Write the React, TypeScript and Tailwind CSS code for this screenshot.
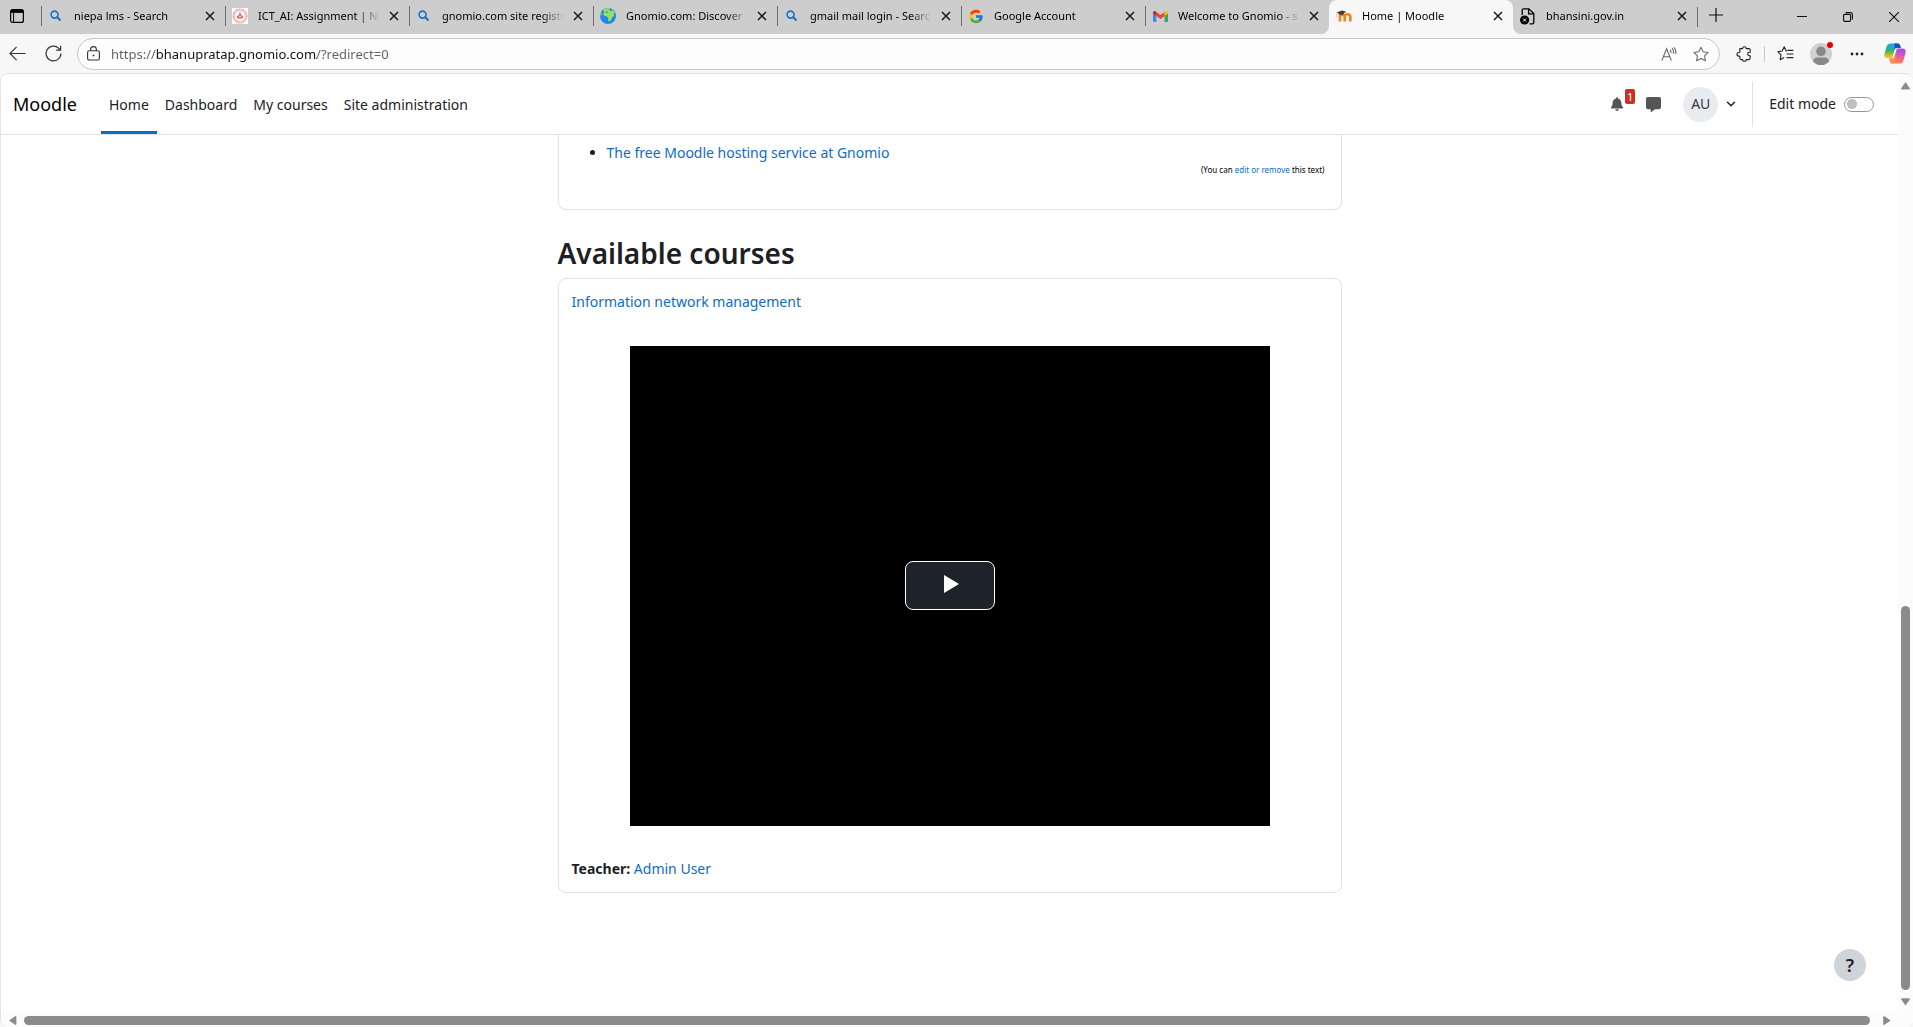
import { ReactNode, useState } from "react";
import { FaBell } from "react-icons/fa";
import { FaMessage } from "react-icons/fa6";
import { FcGoogle } from "react-icons/fc";
import { ChevronDown } from "lucide-react";
import clsx from "clsx";

type BrowserTab = {
  title: string;
  icon: ReactNode;
};

const SearchIcon = () => (
  <svg width="12" height="12" viewBox="0 0 12 12" fill="none" stroke="#1b74c9">
    <circle cx="4.6" cy="4.6" r="3.5" strokeWidth="1.6" />
    <path d="M7.3 7.3 L10 10" strokeWidth="2" strokeLinecap="round" />
  </svg>
);

const NiepaIcon = () => (
  <svg width="16" height="16" viewBox="0 0 16 16">
    <rect width="16" height="16" fill="#fff" />
    <circle cx="8" cy="8" r="6.6" fill="#fbeeee" stroke="#e3a5a8" strokeWidth="1.8" strokeDasharray="1.6 0.5" />
    <circle cx="8" cy="8" r="4.6" fill="#fff" stroke="#eec4c6" strokeWidth="0.6" />
    <path d="M8 4 L9.3 7 L11.2 8.2 L10.4 10.6 H5.6 L4.8 8.2 L6.7 7 Z" fill="#cf5a60" />
    <path d="M8 6.8 V9.6 M6.6 8.6 H9.4" stroke="#fff" strokeWidth="0.7" />
  </svg>
);

const GlobeIcon = () => (
  <svg width="16" height="16" viewBox="0 0 16 16">
    <circle cx="8" cy="8" r="8" fill="#1e88e5" />
    <path
      d="M3 1.8 C5 0.4 8 0 10 0.6 L9.2 2.2 L10.6 3 L12.6 2.2 L14.8 4.6 L13.6 6.4 L14.4 7.6 L12 9.4 L11.4 11.6 L9.6 13.6 L8.2 12.8 L8 9.6 L6.6 8.2 L4.2 8 L3.2 6 L4.2 4.2 Z"
      fill="#9be05a"
    />
    <path d="M0.4 5.6 L1.8 4.4 L2 6.6 L0.6 8 Z" fill="#9be05a" />
    <path d="M5.6 3.6 L8.4 4 L7.6 5 L5.8 4.8 Z" fill="#1e88e5" />
  </svg>
);

const GmailIcon = () => (
  <svg width="15" height="11" viewBox="0 0 15 11">
    <path d="M0 2 L3.4 4.6 V11 H1 Q0 11 0 10 Z" fill="#4285f4" />
    <path d="M15 2 L11.6 4.6 V11 H14 Q15 11 15 10 Z" fill="#34a853" />
    <path d="M3.4 0.9 L7.5 4 L11.6 0.9 V5 L7.5 8.1 L3.4 5 Z" fill="#ea4335" />
    <path d="M0 2 Q0 0 1.6 0 Q2.4 0 3.4 0.9 V5 L0 2.4 Z" fill="#c5221f" />
    <path d="M15 2 Q15 0 13.4 0 Q12.6 0 11.6 0.9 V5 L15 2.4 Z" fill="#fbbc04" />
  </svg>
);

const MoodleIcon = () => (
  <svg width="16" height="12" viewBox="0 0 16 12">
    <path
      d="M4 11.5 V7 Q4 4.7 6.3 4.7 Q8.7 4.7 8.7 7 V11.5 M8.7 7 Q8.7 4.3 11.4 4.3 Q14.3 4.3 14.3 7 V11.5"
      fill="none"
      stroke="#f98012"
      strokeWidth="2.6"
    />
    <path d="M0.6 2.4 L6 0.6 L10.2 1.8 L7.6 3.4 Q7.6 4.6 6.8 5 Q4.6 4 3 5.2 L2.8 3.8 Z" fill="#3b3b3b" />
    <path d="M1 2.8 Q0.4 5 0.8 7.4" fill="none" stroke="#e0a070" strokeWidth="0.6" />
  </svg>
);

const BrokenPageIcon = () => (
  <svg width="16" height="17" viewBox="0 0 16 17">
    <path
      d="M2.2 7 V2.2 Q2.2 0.8 3.6 0.8 H8.8 L13.8 5.6 V14.4 Q13.8 15.8 12.4 15.8 H9.6"
      fill="none"
      stroke="#000"
      strokeWidth="1.3"
    />
    <path d="M8.6 0.8 V5.8 H13.8" fill="none" stroke="#000" strokeWidth="1.3" />
    <circle cx="4.6" cy="12" r="4.6" fill="#000" />
    <path d="M3.1 10.5 L6.1 13.5 M6.1 10.5 L3.1 13.5" stroke="#fff" strokeWidth="1" />
  </svg>
);

const CopilotIcon = () => (
  <svg width="22" height="21" viewBox="0 0 22 21">
    <defs>
      <linearGradient id="copilotLeft" x1="0" y1="0" x2="0" y2="1">
        <stop offset="0" stopColor="#1aa7ee" />
        <stop offset="0.5" stopColor="#35b56a" />
        <stop offset="0.9" stopColor="#f2c21a" />
      </linearGradient>
      <linearGradient id="copilotRight" x1="0.4" y1="0" x2="0.2" y2="1">
        <stop offset="0" stopColor="#a14ff0" />
        <stop offset="0.5" stopColor="#ee5a9c" />
        <stop offset="1" stopColor="#ff8a4c" />
      </linearGradient>
    </defs>
    <path d="M6.6 0.4 H14 Q15.4 0.4 16 2 L16.8 5 H13 Q11.4 5 11 6.4 L8.4 15 H3.4 Q0 15 0.3 11.4 L2.6 3.4 Q3.6 0.4 6.6 0.4 Z" fill="url(#copilotLeft)" />
    <path d="M10.2 0.4 H14 Q15.4 0.4 16 2 L16.8 5 H13 Q11.4 5 11 6.4 Z" fill="#1450c8" />
    <path d="M15.4 20.6 H8 Q6.6 20.6 6 19 L5.2 15.4 H8 Q9.6 15.4 10 14.2 L12.8 5.4 H18.4 Q22 5.6 21.7 9.4 L19.4 17.4 Q18.4 20.6 15.4 20.6 Z" fill="url(#copilotRight)" />
    <path d="M6.6 15 H8.2 Q9.6 15.4 10 14.2 L11.2 10.4 L11.6 15 L9.4 20.6 H8 Q6.6 20.6 6 19 Z" fill="#ff9a3c" opacity="0.8" />
    <path d="M12.8 5.4 L10 14.2 L9.2 15.4 L8.6 14.4 L11 6.4 Q11.4 5.2 12.8 5.4 Z" fill="#f7f7f7" />
  </svg>
);

const tabsBefore: BrowserTab[] = [
  { title: "niepa lms - Search", icon: <SearchIcon /> },
  { title: "ICT_AI: Assignment | NI", icon: <NiepaIcon /> },
  { title: "gnomio.com site registr", icon: <SearchIcon /> },
  { title: "Gnomio.com: Discover", icon: <GlobeIcon /> },
  { title: "gmail mail login - Searc", icon: <SearchIcon /> },
  { title: "Google Account", icon: <FcGoogle size={17} /> },
  { title: "Welcome to Gnomio - s", icon: <GmailIcon /> },
];

const navLinks = ["Home", "Dashboard", "My courses", "Site administration"];

function Tab({ tab, divider = true }: { tab: BrowserTab; divider?: boolean }) {
  return (
    <div className="flex h-full w-[184px] shrink-0 items-center pb-0.5">
      <span className={clsx("h-5 w-px", divider && "bg-[#6e6e6e]")} />
      <span className="ml-1.5 flex w-4 justify-center">{tab.icon}</span>
      <span className="ml-2.5 w-[122px] text-[11px] whitespace-nowrap text-black [mask-image:linear-gradient(to_right,black_82%,transparent)]">
        {tab.title}
      </span>
      <button aria-label={`Close ${tab.title}`} className="ml-1.5 flex size-4 items-center justify-center">
        <svg width="10" height="10" viewBox="0 0 10 10" stroke="#111" strokeWidth="1.4">
          <path d="M1 1 L9 9 M9 1 L1 9" />
        </svg>
      </button>
    </div>
  );
}

function TabStrip() {
  return (
    <div className="flex h-[34px] bg-[#f7f7f7]">
      <div className="flex items-center rounded-br-lg bg-[#cdcdcd]">
        <button aria-label="Tab actions" className="flex w-[41px] items-center pb-0.5 pl-2.5">
          <svg width="14" height="14" viewBox="0 0 14 14" fill="none" stroke="#000">
            <rect x="0.6" y="0.6" width="12.8" height="12.8" rx="2" strokeWidth="1.2" />
            <path d="M1 2.4 H13" strokeWidth="3" />
            <path d="M3.6 3 V13" strokeWidth="1" />
          </svg>
        </button>
        {tabsBefore.map((tab) => (
          <Tab key={tab.title} tab={tab} />
        ))}
      </div>
      <div className="bg-[#cdcdcd]">
        <div className="h-full rounded-t-lg bg-[#f7f7f7]">
          <Tab tab={{ title: "Home | Moodle", icon: <MoodleIcon /> }} divider={false} />
        </div>
      </div>
      <div className="flex flex-1 items-center rounded-bl-lg bg-[#cdcdcd]">
        <Tab tab={{ title: "bhansini.gov.in", icon: <BrokenPageIcon /> }} divider={false} />
        <span className="h-5 w-px bg-[#6e6e6e]" />
        <button aria-label="New tab" className="ml-2 flex size-5 items-center justify-center pb-1">
          <svg width="14" height="14" viewBox="0 0 14 14" stroke="#111" strokeWidth="1.2">
            <path d="M7 0 V14 M0 7 H14" />
          </svg>
        </button>
        <div className="ml-auto flex gap-2">
          <button aria-label="Minimize" className="flex h-[34px] w-[38px] items-center justify-center">
            <svg width="10" height="10" viewBox="0 0 10 10" stroke="#111">
              <path d="M0 4.5 H10" />
            </svg>
          </button>
          <button aria-label="Restore" className="flex h-[34px] w-[38px] items-center justify-center">
            <svg width="10" height="10" viewBox="0 0 10 10" fill="none" stroke="#111" strokeWidth="1.1">
              <rect x="0.6" y="2.4" width="7" height="7" rx="1.2" />
              <path d="M2.6 0.6 H7.6 Q9.4 0.6 9.4 2.4 V7.4" />
            </svg>
          </button>
          <button aria-label="Close window" className="flex h-[34px] w-[38px] items-center justify-center">
            <svg width="10" height="10" viewBox="0 0 10 10" stroke="#111" strokeWidth="1.1">
              <path d="M0 0 L10 10 M10 0 L0 10" />
            </svg>
          </button>
        </div>
      </div>
    </div>
  );
}

function AddressBar() {
  const [url, setUrl] = useState("https://bhanupratap.gnomio.com/?redirect=0");

  return (
    <div className="flex h-[39px] items-center bg-[#f7f7f7] pl-2">
      <button aria-label="Back" className="flex w-[18px] justify-center">
        <svg width="17" height="15" viewBox="0 0 17 15" fill="none" stroke="#333" strokeWidth="1.1">
          <path d="M16.5 7.5 H1 M7.6 0.8 L0.9 7.5 L7.6 14.2" />
        </svg>
      </button>
      <button aria-label="Refresh" className="ml-[18px] flex w-[18px] justify-center">
        <svg width="17" height="17" viewBox="0 0 17 17" fill="none" stroke="#333" strokeWidth="1.2">
          <path d="M15.9 8.5 A7.4 7.4 0 1 1 13.8 3.3 L15.4 5" />
          <path d="M15.6 0.8 V5.2 H11.2" />
        </svg>
      </button>
      <div className="ml-[15px] flex h-8 flex-1 items-center rounded-full border border-[#c8c8c8] bg-[#fdfdfd] pr-2.5 pl-[9px]">
        <svg width="13" height="15" viewBox="0 0 13 15" fill="none" stroke="#333" strokeWidth="1.1">
          <rect x="0.6" y="4.8" width="11.8" height="9.2" rx="1.6" />
          <path d="M3.6 4.8 V3.4 Q3.6 0.6 6.5 0.6 Q9.4 0.6 9.4 3.4 V4.8" />
          <circle cx="6.5" cy="9.4" r="0.9" fill="#333" stroke="none" />
        </svg>
        <input
          aria-label="Address"
          value={url}
          onChange={(e) => setUrl(e.target.value)}
          className="ml-[11px] h-6 flex-1 bg-[linear-gradient(to_right,#5f5f5f_45px,#111_45px,#111_206px,#5f5f5f_206px)] bg-clip-text text-[13px] text-transparent caret-black outline-none"
        />
        <button aria-label="Read aloud" className="flex w-4 justify-center">
          <svg width="16" height="14" viewBox="0 0 16 14" fill="none" stroke="#666" strokeWidth="1.1">
            <path d="M0.8 13.6 L5.6 1.8 L10.4 13.6 M2.4 9.8 H8.8" />
            <path d="M9 2.6 Q10.4 4 9.8 6 M11 1.2 Q13.2 3.6 12.2 6.6 M12.8 0.4 Q15.8 3.2 14.4 7" />
          </svg>
        </button>
        <button aria-label="Add to favorites" className="ml-4 flex w-4 justify-center">
          <svg width="17" height="16" viewBox="0 0 17 16" fill="none" stroke="#666" strokeWidth="1.1" strokeLinejoin="round">
            <path d="M8.5 0.8 L10.8 5.6 L16.1 6.3 L12.3 10 L13.2 15.2 L8.5 12.7 L3.8 15.2 L4.7 10 L0.9 6.3 L6.2 5.6 Z" />
          </svg>
        </button>
      </div>
      <button aria-label="Extensions" className="ml-4 flex w-4 justify-center">
        <svg width="16" height="16" viewBox="0 0 16 16" fill="none" stroke="#222" strokeWidth="1.1" strokeLinejoin="round">
          <path d="M3.8 2.6 H6.6 Q6.6 0.7 8.4 0.7 Q10.2 0.7 10.2 2.6 H12.8 Q14.2 2.6 14.2 4 V6.2 Q11.8 6 11.8 8 Q11.8 10 14.2 9.8 V12 Q14.2 13.6 12.8 13.6 H10.4 Q10.2 15.3 8.4 15.3 Q6.6 15.3 6.5 13.6 H5.2 Q3.8 13.6 3.8 12 V10.2 Q1 10.2 1 8.2 Q1 6.2 3.8 6.2 Z" />
        </svg>
      </button>
      <span className="ml-3 h-4 w-px bg-[#c9c9c9]" />
      <button aria-label="Favorites" className="ml-3 flex w-[17px] justify-center">
        <svg width="17" height="15" viewBox="0 0 17 15" fill="none" stroke="#222" strokeWidth="1.1" strokeLinejoin="round">
          <path d="M10.2 5 L9.2 5 L7.2 0.8 L5.2 5 L0.8 5.7 L4 8.9 L3.2 13.8 L7.2 11.6" />
          <path d="M10.4 4.4 H16.4 M9.6 8 H16.4 M9.6 11.6 H16.4" />
        </svg>
      </button>
      <button aria-label="Profile" className="relative ml-4 size-[22px] rounded-full">
        <svg width="22" height="22" viewBox="0 0 22 22">
          <circle cx="11" cy="11" r="11" fill="#d2d0ce" />
          <circle cx="11" cy="8.4" r="4.8" fill="#8a8886" />
          <path d="M3 18.4 Q3.6 14.4 7 14.4 H15 Q18.4 14.4 19 18.4 Q15.6 22 11 22 Q6.4 22 3 18.4 Z" fill="#8a8886" />
        </svg>
        <span className="absolute -top-px -right-px size-1.5 rounded-full bg-[#e60000]" />
      </button>
      <button aria-label="Settings and more" className="ml-[18px] flex w-[14px] justify-center">
        <svg width="14" height="4" viewBox="0 0 14 4" fill="#222">
          <circle cx="2" cy="2" r="1.4" />
          <circle cx="7" cy="2" r="1.4" />
          <circle cx="12" cy="2" r="1.4" />
        </svg>
      </button>
      <button aria-label="Copilot" className="mr-[7px] ml-5">
        <CopilotIcon />
      </button>
    </div>
  );
}

function Navbar() {
  const [editMode, setEditMode] = useState(false);

  return (
    <header className="flex h-[61px] shrink-0 items-center border-b border-[#dee2e6] bg-white pl-3">
      <a href="#" className="text-lg text-black">
        Moodle
      </a>
      <nav className="ml-6 flex h-full">
        {navLinks.map((link) => (
          <a
            key={link}
            href="#"
            className={clsx(
              "flex items-center border-b-[3px] px-2 pt-1",
              link === "Home" ? "border-b-[#0f6cbf]" : "border-b-transparent"
            )}
          >
            {link}
          </a>
        ))}
      </nav>
      <div className="ml-auto flex h-full items-center">
        <button aria-label="Notifications" className="relative flex w-4 justify-center">
          <FaBell size={14} className="text-[#555]" />
          <span className="absolute bottom-[7px] left-4 flex h-[15px] w-2.5 items-center justify-center rounded-xs bg-[#ca3120] text-[11px] text-white">
            1
          </span>
        </button>
        <button aria-label="Messages" className="ml-5 flex w-4 justify-center">
          <FaMessage size={15} className="text-[#555]" />
        </button>
        <button aria-label="User menu" className="ml-[22px] flex items-center">
          <span className="flex size-[35px] items-center justify-center rounded-full bg-[#e9ecef] text-[#343a40]">AU</span>
          <ChevronDown size={14} strokeWidth={2.5} className="ml-1.5" />
        </button>
        <div className="ml-3.5 flex h-[45px] items-center gap-2 border-l border-[#dee2e6] pr-6 pl-4">
          <label htmlFor="editMode">Edit mode</label>
          <input
            id="editMode"
            type="checkbox"
            role="switch"
            checked={editMode}
            onChange={(e) => setEditMode(e.target.checked)}
            className="h-[15px] w-[30px] appearance-none rounded-full border border-[#8f959e] bg-white bg-[radial-gradient(circle_at_7px_6px,#bfbfbf_5px,transparent_5px)] checked:bg-[#0f6cbf]"
          />
        </div>
      </div>
    </header>
  );
}

function VerticalScrollbar() {
  return (
    <div className="flex w-[15px] shrink-0 flex-col items-center bg-[#fcfcfc] pt-2 pb-[7px]">
      <svg width="9" height="8" viewBox="0 0 9 8" fill="#8b8b8b">
        <path d="M4.5 0 L9 6.4 Q9 7.4 8 7.4 H1 Q0 7.4 0 6.4 Z" />
      </svg>
      <div className="my-2 flex w-full flex-1 flex-col items-center justify-end">
        <div className="h-[43%] w-[9px] rounded-full bg-[#8b8b8b]" />
      </div>
      <svg width="9" height="8" viewBox="0 0 9 8" fill="#8b8b8b">
        <path d="M4.5 7.6 L9 1.2 Q9 0.2 8 0.2 H1 Q0 0.2 0 1.2 Z" />
      </svg>
    </div>
  );
}

function HorizontalScrollbar() {
  return (
    <div className="flex h-3.5 shrink-0 items-center bg-[#fcfcfc] pr-[22px] pl-2">
      <svg width="8" height="9" viewBox="0 0 8 9" fill="#8b8b8b">
        <path d="M0 4.5 L6.4 0 Q7.4 0 7.4 1 V8 Q7.4 9 6.4 9 Z" />
      </svg>
      <div className="mr-[13px] ml-[7px] h-[9px] flex-1 rounded-full bg-[#8b8b8b]" />
      <svg width="8" height="9" viewBox="0 0 8 9" fill="#8b8b8b">
        <path d="M7.6 4.5 L1.2 0 Q0.2 0 0.2 1 V8 Q0.2 9 1.2 9 Z" />
      </svg>
    </div>
  );
}

export default function App() {
  return (
    <div className="flex h-screen flex-col overflow-hidden bg-[#f7f7f7] font-['Noto_Sans','Open_Sans',sans-serif] text-sm text-[#1d2125]">
      <TabStrip />
      <AddressBar />
      <div className="flex min-h-0 flex-1 flex-col overflow-hidden rounded-lg border-t border-l border-[#e3e3e3] bg-white">
        <div className="flex min-h-0 flex-1">
          <div className="relative flex min-w-0 flex-1 flex-col">
            <Navbar />
            <main className="mx-auto w-full max-w-[784px] flex-1">
              <section className="rounded-b-lg border border-t-0 border-[#dee2e6] px-4 pt-2 pb-8">
                <ul className="list-disc pl-8">
                  <li>
                    <a href="#" className="text-[#0f6cbf]">
                      The free Moodle hosting service at Gnomio
                    </a>
                  </li>
                </ul>
                <p className="text-right text-[8px] leading-[14px] text-black">
                  (You can{" "}
                  <a href="#" className="text-[#0f6cbf]">
                    edit or remove
                  </a>{" "}
                  this text)
                </p>
              </section>
              <h2 className="mt-[25px] mb-[7px] text-[28px] leading-9 font-semibold">Available courses</h2>
              <section className="rounded-lg border border-[#dee2e6] p-[13px]">
                <h3>
                  <a href="#" className="text-[#0f6cbf]">
                    Information network management
                  </a>
                </h3>
                <div className="mx-auto mt-[34px] flex h-[480px] max-w-[640px] items-center justify-center bg-black pb-0.5">
                  <button
                    aria-label="Play Video"
                    className="flex h-[49px] w-[90px] items-center justify-center rounded-lg border border-white bg-[#1d2329]"
                  >
                    <svg width="18" height="20" viewBox="0 0 18 20" fill="#fff">
                      <path d="M3 0 L18 9 L3 18 Z" />
                    </svg>
                  </button>
                </div>
                <p className="mt-[33px]">
                  <span className="font-bold">Teacher:</span>{" "}
                  <a href="#" className="text-[#0f6cbf]">
                    Admin User
                  </a>
                </p>
              </section>
            </main>
            <button
              aria-label="Help"
              className="absolute right-8 bottom-8 flex size-8 items-center justify-center rounded-full bg-[#ced4da] text-lg font-semibold"
            >
              ?
            </button>
          </div>
          <VerticalScrollbar />
        </div>
        <HorizontalScrollbar />
      </div>
    </div>
  );
}
